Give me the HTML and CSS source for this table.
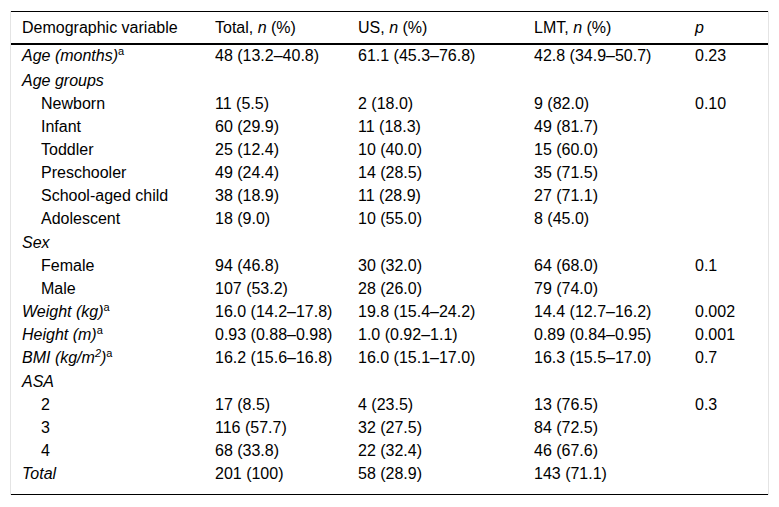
FILE: index.html
```html
<!DOCTYPE html>
<html>
<head>
<meta charset="utf-8">
<link rel="stylesheet" href="styles.css">
</head>
<body>
<div class="frame">
<table class="demo">
<colgroup>
<col class="c1"><col class="c2"><col class="c3"><col class="c4"><col class="c5">
</colgroup>
<thead>
<tr><th>Demographic variable</th><th>Total, <i>n</i> (%)</th><th>US, <i>n</i> (%)</th><th>LMT, <i>n</i> (%)</th><th><i>p</i></th></tr>
</thead>
<tbody>
<tr class="first"><td><i>Age (months)</i><sup>a</sup></td><td>48 (13.2–40.8)</td><td>61.1 (45.3–76.8)</td><td>42.8 (34.9–50.7)</td><td>0.23</td></tr>
<tr><td><i>Age groups</i></td><td></td><td></td><td></td><td></td></tr>
<tr><td class="ind">Newborn</td><td>11 (5.5)</td><td>2 (18.0)</td><td>9 (82.0)</td><td>0.10</td></tr>
<tr><td class="ind">Infant</td><td>60 (29.9)</td><td>11 (18.3)</td><td>49 (81.7)</td><td></td></tr>
<tr><td class="ind">Toddler</td><td>25 (12.4)</td><td>10 (40.0)</td><td>15 (60.0)</td><td></td></tr>
<tr><td class="ind">Preschooler</td><td>49 (24.4)</td><td>14 (28.5)</td><td>35 (71.5)</td><td></td></tr>
<tr><td class="ind">School-aged child</td><td>38 (18.9)</td><td>11 (28.9)</td><td>27 (71.1)</td><td></td></tr>
<tr><td class="ind">Adolescent</td><td>18 (9.0)</td><td>10 (55.0)</td><td>8 (45.0)</td><td></td></tr>
<tr class="group"><td><i>Sex</i></td><td></td><td></td><td></td><td></td></tr>
<tr><td class="ind">Female</td><td>94 (46.8)</td><td>30 (32.0)</td><td>64 (68.0)</td><td>0.1</td></tr>
<tr><td class="ind">Male</td><td>107 (53.2)</td><td>28 (26.0)</td><td>79 (74.0)</td><td></td></tr>
<tr><td><i>Weight (kg)</i><sup>a</sup></td><td>16.0 (14.2–17.8)</td><td>19.8 (15.4–24.2)</td><td>14.4 (12.7–16.2)</td><td>0.002</td></tr>
<tr><td><i>Height (m)</i><sup>a</sup></td><td>0.93 (0.88–0.98)</td><td>1.0 (0.92–1.1)</td><td>0.89 (0.84–0.95)</td><td>0.001</td></tr>
<tr><td><i>BMI (kg/m<sup>2</sup>)</i><sup>a</sup></td><td>16.2 (15.6–16.8)</td><td>16.0 (15.1–17.0)</td><td>16.3 (15.5–17.0)</td><td>0.7</td></tr>
<tr class="group"><td><i>ASA</i></td><td></td><td></td><td></td><td></td></tr>
<tr><td class="ind">2</td><td>17 (8.5)</td><td>4 (23.5)</td><td>13 (76.5)</td><td>0.3</td></tr>
<tr><td class="ind">3</td><td>116 (57.7)</td><td>32 (27.5)</td><td>84 (72.5)</td><td></td></tr>
<tr><td class="ind">4</td><td>68 (33.8)</td><td>22 (32.4)</td><td>46 (67.6)</td><td></td></tr>
<tr class="last"><td><i>Total</i></td><td>201 (100)</td><td>58 (28.9)</td><td>143 (71.1)</td><td></td></tr>
</tbody>
</table>
</div>
</body>
</html>
```

FILE: styles.css
```css
html, body {
  margin: 0;
  padding: 0;
  background: #fff;
}

.frame {
  margin: 11px 10px 0 10px;
  border-left: 1px solid #e4e4e4;
  border-right: 1px solid #e4e4e4;
  width: 757px;
}

.demo {
  width: 757px;
  table-layout: fixed;
  border-collapse: collapse;
  font-family: "Liberation Sans", Arial, sans-serif;
  font-size: 16px;
  color: #000;
  border-top: 1px solid #000;
  border-bottom: 1px solid #000;
}

.c1 { width: 193px; }
.c2 { width: 143px; }
.c3 { width: 176px; }
.c4 { width: 161px; }
.c5 { width: 84px; }

.demo th {
  text-align: left;
  font-weight: normal;
  padding: 7px 11px 7px 11px;
  line-height: 17px;
  border-bottom: 2px solid #000;
}

.demo td {
  padding: 3px 11px;
  line-height: 17px;
  vertical-align: top;
  white-space: nowrap;
}

.demo tr.first td {
  padding-top: 2px;
  padding-bottom: 5px;
}

.demo tr.group td {
  padding-top: 4px;
}

.demo tr.last td {
  padding-bottom: 12px;
}

.demo td.ind {
  padding-left: 30px;
}

.demo sup {
  font-size: 11px;
  line-height: 0;
  vertical-align: 6px;
}
```
